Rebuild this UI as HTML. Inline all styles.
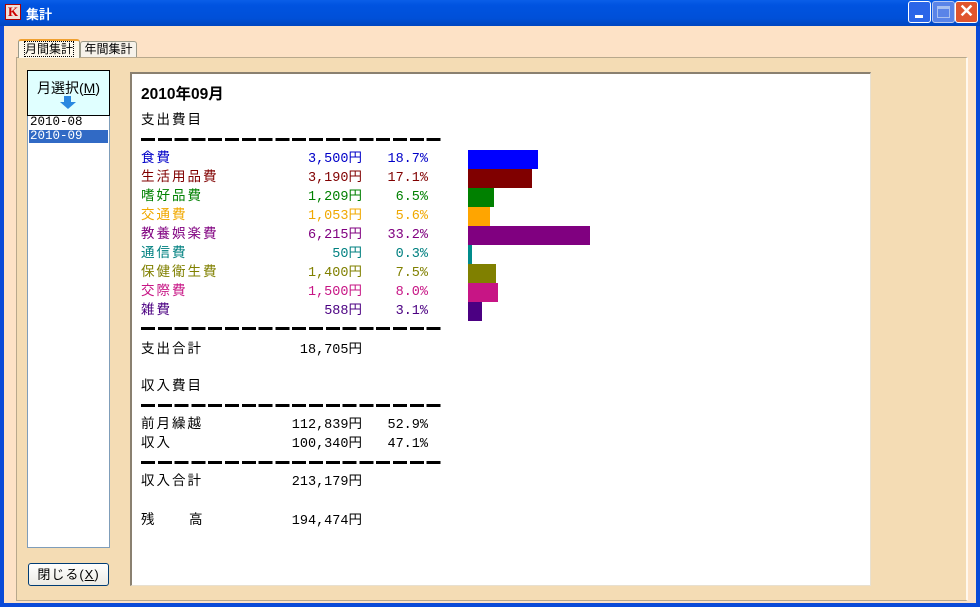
<!DOCTYPE html>
<html><head><meta charset="utf-8"><style>
*{margin:0;padding:0;box-sizing:border-box}
body{width:980px;height:607px;overflow:hidden;background:#0a4ad8;font-family:"Liberation Sans","Noto Sans CJK JP",sans-serif;position:relative}
.a{position:absolute}
#title{left:0;top:0;width:980px;height:26px;background:linear-gradient(#0a5ee8,#0053e0 20%,#0050d8 70%,#0046c0);}
#body{left:4px;top:26px;width:972px;height:577px;background:#fde2c6;}
#tabpanel{left:16px;top:57px;width:952px;height:544px;background:#f4dcb4;border:1px solid #b8a88c;border-right:2px solid #fff8ee}
.t{position:absolute;font-size:13.5px;white-space:nowrap;line-height:19px;font-family:"Liberation Mono","Noto Sans CJK JP",monospace}
.lab{letter-spacing:2px}
.r{text-align:right}
.d{position:absolute;left:141px;width:302px;height:3px;background:repeating-linear-gradient(90deg,#000 0 14px,transparent 14px 16.8px)}
.bar{position:absolute;left:468px;height:19px}
.btn{position:absolute;width:23px;height:22px;top:1px;border:1px solid #fff;border-radius:3px}
</style></head><body>
<div id="title" class="a"></div>
<div class="a" style="left:5px;top:4px;width:16px;height:16px;background:#f0e0d8;border:1px solid #a00;color:#c00;font:bold 13px 'Liberation Serif',serif;text-align:center;line-height:14px">K</div>
<div class="a" style="left:26px;top:4px;color:#fff;font-weight:bold;font-size:13px">集計</div>
<div class="btn" style="left:908px;background:#2b65e8"><div class="a" style="left:6px;top:13px;width:8px;height:3px;background:#fff"></div></div>
<div class="btn" style="left:932px;background:#5a84e8;border-color:#b8c8f0"><div class="a" style="left:4px;top:4px;width:13px;height:12px;border:1px solid #a8c0f0;border-top-width:3px"></div></div>
<div class="btn" style="left:955px;background:#e0552e"><div class="a" style="left:0;top:-1px;width:21px;text-align:center;color:#fff;font-size:18px;font-weight:bold">✕</div></div>
<div id="body" class="a"></div>
<div id="tabpanel" class="a"></div>
<div class="a" style="left:18px;top:39px;width:62px;height:19px;background:#fdf8ec;border:1px solid #9a9a8a;border-bottom:none;border-top:2px solid #f0a030;border-radius:3px 3px 0 0;font-size:12px;text-align:center;line-height:16px"><span style="outline:1px dotted #000">月間集計</span></div>
<div class="a" style="left:80px;top:41px;width:57px;height:16px;background:#f6f2ea;border:1px solid #9a9a8a;border-bottom:none;border-radius:3px 3px 0 0;font-size:12px;text-align:center;line-height:15px">年間集計</div>
<div class="a" style="left:27px;top:70px;width:83px;height:478px;background:#fff;border:1px solid #7f9db9"></div>
<div class="a" style="left:27px;top:70px;width:83px;height:46px;background:#e0ffff;border:1px solid #000;text-align:center;font-size:14px;padding-top:7px">月選択(<u>M</u>)</div>
<div class="a" style="left:64px;top:96px;width:7px;height:6px;background:#2a88e0"></div>
<div class="a" style="left:60px;top:102px;width:0;height:0;border-left:8px solid transparent;border-right:8px solid transparent;border-top:7px solid #2a88e0"></div>
<div class="a" style="left:30px;top:116px;font-size:12.5px;line-height:13px;font-family:'Liberation Mono',monospace">2010-08</div>
<div class="a" style="left:29px;top:130px;width:79px;height:13px;background:#316ac5;color:#fff;font-size:12.5px;line-height:13px;padding-left:1px;font-family:'Liberation Mono',monospace">2010-09</div>
<div class="a" style="left:28px;top:563px;width:81px;height:23px;background:linear-gradient(#fff,#ecebe4);border:1px solid #003c74;border-radius:3px;font-size:13px;text-align:center;line-height:21px;letter-spacing:1px">閉じる(<u>X</u>)</div>
<div class="a" style="left:130px;top:72px;width:741px;height:514px;background:#fff;border-top:2px solid #8a8070;border-left:2px solid #8a8070;border-right:1px solid #e8e0d0;border-bottom:1px solid #e8e0d0"></div>
<div class="a" style="left:141px;top:82px;font-size:15.5px;font-weight:bold">2010年09月</div>
<div class="t lab" style="left:141px;top:112px">支出費目</div>
<div class="d" style="top:138px"></div>
<div class="t lab" style="left:141px;top:150px;color:#0000c8">食費</div><div class="t r" style="left:262px;width:100px;top:150px;color:#0000c8">3,500円</div><div class="t r" style="left:370px;width:58px;top:150px;color:#0000c8">18.7%</div>
<div class="t lab" style="left:141px;top:169px;color:#800000">生活用品費</div><div class="t r" style="left:262px;width:100px;top:169px;color:#800000">3,190円</div><div class="t r" style="left:370px;width:58px;top:169px;color:#800000">17.1%</div>
<div class="t lab" style="left:141px;top:188px;color:#008000">嗜好品費</div><div class="t r" style="left:262px;width:100px;top:188px;color:#008000">1,209円</div><div class="t r" style="left:370px;width:58px;top:188px;color:#008000">6.5%</div>
<div class="t lab" style="left:141px;top:207px;color:#f0a800">交通費</div><div class="t r" style="left:262px;width:100px;top:207px;color:#f0a800">1,053円</div><div class="t r" style="left:370px;width:58px;top:207px;color:#f0a800">5.6%</div>
<div class="t lab" style="left:141px;top:226px;color:#800080">教養娯楽費</div><div class="t r" style="left:262px;width:100px;top:226px;color:#800080">6,215円</div><div class="t r" style="left:370px;width:58px;top:226px;color:#800080">33.2%</div>
<div class="t lab" style="left:141px;top:245px;color:#008080">通信費</div><div class="t r" style="left:262px;width:100px;top:245px;color:#008080">50円</div><div class="t r" style="left:370px;width:58px;top:245px;color:#008080">0.3%</div>
<div class="t lab" style="left:141px;top:264px;color:#808000">保健衛生費</div><div class="t r" style="left:262px;width:100px;top:264px;color:#808000">1,400円</div><div class="t r" style="left:370px;width:58px;top:264px;color:#808000">7.5%</div>
<div class="t lab" style="left:141px;top:283px;color:#c71585">交際費</div><div class="t r" style="left:262px;width:100px;top:283px;color:#c71585">1,500円</div><div class="t r" style="left:370px;width:58px;top:283px;color:#c71585">8.0%</div>
<div class="t lab" style="left:141px;top:302px;color:#4b0082">雑費</div><div class="t r" style="left:262px;width:100px;top:302px;color:#4b0082">588円</div><div class="t r" style="left:370px;width:58px;top:302px;color:#4b0082">3.1%</div>
<div class="bar" style="top:150px;width:70px;background:#0000ff"></div>
<div class="bar" style="top:169px;width:64px;background:#800000"></div>
<div class="bar" style="top:188px;width:26px;background:#008000"></div>
<div class="bar" style="top:207px;width:22px;background:#ffa500"></div>
<div class="bar" style="top:226px;width:122px;background:#800080"></div>
<div class="bar" style="top:245px;width:4px;background:#008b8b"></div>
<div class="bar" style="top:264px;width:28px;background:#808000"></div>
<div class="bar" style="top:283px;width:30px;background:#c71585"></div>
<div class="bar" style="top:302px;width:14px;background:#4b0082"></div>
<div class="d" style="top:327px"></div>
<div class="t lab" style="left:141px;top:341px">支出合計</div><div class="t r" style="left:262px;width:100px;top:341px">18,705円</div>
<div class="t lab" style="left:141px;top:378px">収入費目</div>
<div class="d" style="top:404px"></div>
<div class="t lab" style="left:141px;top:416px">前月繰越</div><div class="t r" style="left:262px;width:100px;top:416px">112,839円</div><div class="t r" style="left:370px;width:58px;top:416px">52.9%</div>
<div class="t lab" style="left:141px;top:435px">収入</div><div class="t r" style="left:262px;width:100px;top:435px">100,340円</div><div class="t r" style="left:370px;width:58px;top:435px">47.1%</div>
<div class="d" style="top:461px"></div>
<div class="t lab" style="left:141px;top:473px">収入合計</div><div class="t r" style="left:262px;width:100px;top:473px">213,179円</div>
<div class="t" style="left:141px;top:512px">残</div><div class="t" style="left:189px;top:512px">高</div><div class="t r" style="left:262px;width:100px;top:512px">194,474円</div>
</body></html>
